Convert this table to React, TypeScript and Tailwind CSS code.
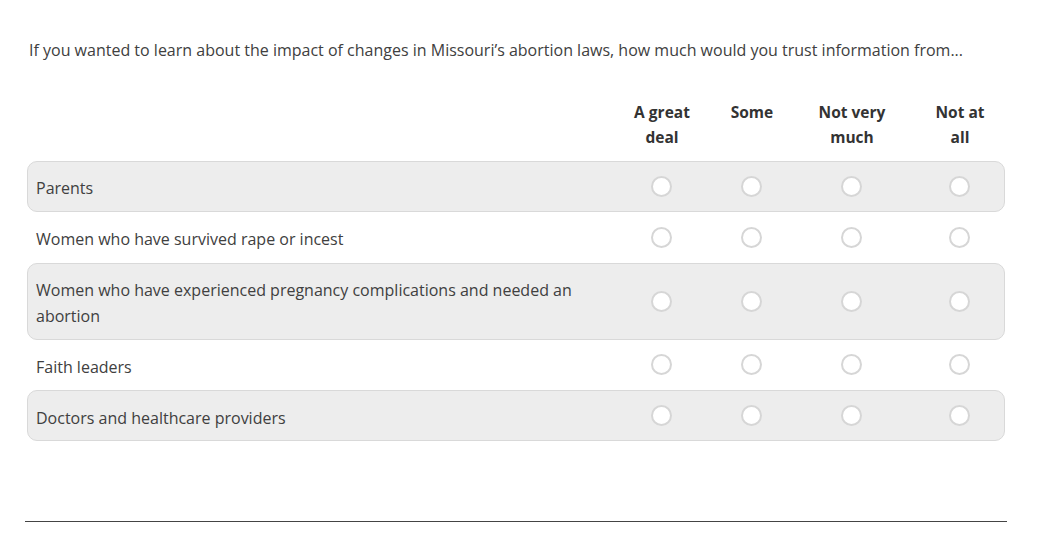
import React from 'react';

const columns = [
  { label: 'A great deal', width: 'w-[106px]' },
  { label: 'Some', width: 'w-[74px]' },
  { label: 'Not very much', width: 'w-[126px]' },
  { label: 'Not at all', width: 'w-[90px]' },
];

const statements = [
  'Parents',
  'Women who have survived rape or incest',
  'Women who have experienced pregnancy complications and needed an abortion',
  'Faith leaders',
  'Doctors and healthcare providers',
];

const Radio = () => (
  <span className="block h-[21px] w-[21px] rounded-full border-2 border-[#d6d6d6] bg-white" />
);

export default function App() {
  return (
    <div
      className="min-h-[544px] w-[1037px] bg-white text-[#404040]"
      style={{ fontFamily: '"Open Sans", "Liberation Sans", sans-serif' }}
    >
      <div className="px-[29px] pt-[38px] text-[16px] leading-6">
        If you wanted to learn about the impact of changes in Missouri’s abortion laws, how much would you trust information from...
      </div>

      <div className="mx-[27px] mt-[38px] w-[978px]">
        {/* column headers */}
        <div className="flex pb-[11px]">
          <div className="flex-1" />
          {columns.map((col) => (
            <div
              key={col.label}
              className={`${col.width} flex justify-center text-center text-[15.5px] font-bold leading-[25px] text-[#333]`}
            >
              <span className="block max-w-[68px]">{col.label}</span>
            </div>
          ))}
        </div>

        {statements.map((s, i) => (
          <div
            key={s}
            className={
              i % 2 === 0
                ? 'flex items-center rounded-[10px] border border-[#d9d9d9] bg-[#ededed]'
                : 'flex items-center rounded-[10px] border border-transparent bg-white'
            }
          >
            <div className="flex-1 pt-[14.2px] pb-[9.2px] pl-[8px] pr-[20px] text-[16px] leading-[1.6]">
              <span className="block max-w-[550px]">{s}</span>
            </div>
            {columns.map((col) => (
              <div key={col.label} className={`${col.width} flex justify-center`}>
                <Radio />
              </div>
            ))}
          </div>
        ))}
      </div>

      <div className="mx-[25px] mt-[80px] h-px w-[982px] bg-[#444]" />
    </div>
  );
}
